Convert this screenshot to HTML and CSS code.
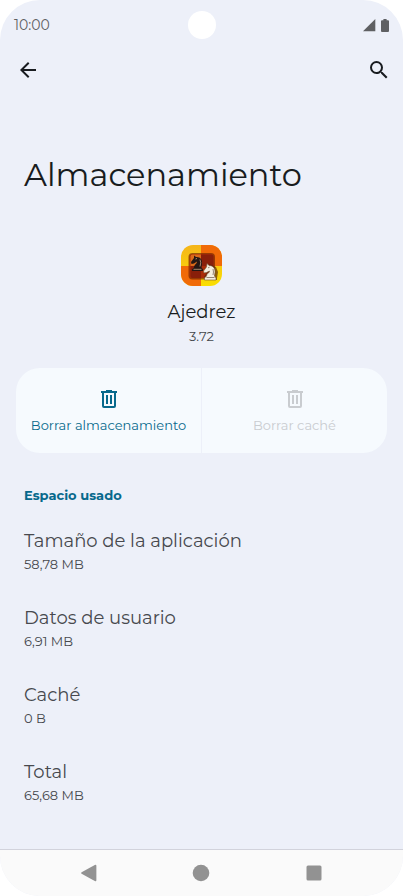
FILE: index.html
```html
<!DOCTYPE html>
<html lang="es">
<head>
<meta charset="utf-8">
<meta name="viewport" content="width=device-width, initial-scale=1">
<title>Almacenamiento</title>
<link rel="stylesheet" href="styles.css">
</head>
<body>
<div class="phone">
  <header>
    <div class="status">
      <span class="clock">10:00</span>
      <span class="camera"></span>
      <span class="indicators">
        <svg width="13" height="13" viewBox="0 0 13 13" aria-hidden="true"><path d="M12.3 0V12.3H0Z"/></svg>
        <svg width="8" height="13" viewBox="0 0 8 13" aria-hidden="true"><path d="M2.4 0h3.2v1.2H7q1 0 1 1V12q0 1-1 1H1q-1 0-1-1V2.2q0-1 1-1h1.4Z"/></svg>
      </span>
    </div>
    <div class="toolbar">
      <button type="button" class="icon-button" aria-label="Atrás">
        <svg width="24" height="24" viewBox="0 0 24 24"><path d="M20 11H7.83l5.59-5.59L12 4l-8 8 8 8 1.41-1.41L7.83 13H20v-2z"/></svg>
      </button>
      <button type="button" class="icon-button" aria-label="Buscar">
        <svg width="24" height="24" viewBox="0 0 24 24"><path d="M15.5 14h-.79l-.28-.27A6.47 6.47 0 0 0 16 9.5 6.5 6.5 0 1 0 9.5 16c1.61 0 3.09-.59 4.23-1.57l.27.28v.79l5 4.99L20.49 19l-4.99-5zm-6 0C7.01 14 5 11.99 5 9.5S7.01 5 9.5 5 14 7.01 14 9.5 11.99 14 9.5 14z"/></svg>
      </button>
    </div>
  </header>
  <main>
    <h1>Almacenamiento</h1>
    <section class="app">
      <svg class="app-icon" width="42" height="42" viewBox="0 0 42 42" role="img" aria-label="Ajedrez">
        <defs>
          <clipPath id="tile"><rect x="0" y="0" width="41" height="41" rx="12"/></clipPath>
          <linearGradient id="gold" x1="0" y1="0" x2="0" y2="1"><stop offset="0" stop-color="#f5b51c"/><stop offset="1" stop-color="#fae000"/></linearGradient>
        </defs>
        <g clip-path="url(#tile)">
          <path fill="url(#gold)" d="M0 0h42v42H0z"/>
          <path fill="#f06a08" d="M20 0h22v21H20zM0 21h20v21H0z"/>
        </g>
        <rect x="7.500" y="8" width="26.500" height="26.500" rx="4" fill="#682000" opacity=".65"/>
        <rect x="8.500" y="9" width="24" height="24" rx="3" fill="#a92c09"/>
        <path fill="#d96a1a" d="M11.500 9.500H20V21H9.500v-9.500q0-2 2-2z"/>
        <path fill="#891f0a" d="M20 9.500h10.500q2 0 2 2V21H20zM9.500 21H20v12h-8.500q-2 0-2-2z"/>
        <path fill="#241714" d="M13 10.500l2 1.500c4-.5 6.500 2.500 6 6.500l-.5 4 1.500 2V26H11v-1.500l2-2c0-3 3-3.500 3-6l-3 2-2.500.5-.5-2 3-4z"/>
        <path d="M14.500 14l1.500-.5M19 14.500q1.500 3 0 7M12.500 24.300h8" fill="none" stroke="#dfb995" stroke-width=".7"/>
        <path fill="#542009" opacity=".65" d="M28 19l7 3 2 5-1 6v2H24l-1-3 5-8z"/>
        <path fill="#f4efe0" stroke="#72512f" stroke-width=".6" d="M26 18.500l2 2c4 0 6.500 3 6 7l-.5 3.500 1.500 2v2H23.500v-2l2-2c0-2.500 3-3 3-5l-3 1.500-2.500.5-.5-2 3-4z"/>
        <path d="M27 22.800l1.500-.5M32 24q1 3 0 6M25.500 32.500h8" fill="none" stroke="#6d5847" stroke-width=".7"/>
      </svg>
      <h2>Ajedrez</h2>
      <p>3.72</p>
    </section>
    <div class="actions">
      <button type="button">
        <svg width="24" height="24" viewBox="0 0 24 24" aria-hidden="true"><path fill-rule="evenodd" d="M9 3h6v1h5v2h-1v13q0 2-2 2H7q-2 0-2-2V6H4V4h5zM7 6v13h10V6zM9 8h2v9H9zM13 8h2v9h-2z"/></svg>
        <span>Borrar almacenamiento</span>
      </button>
      <button type="button" disabled>
        <svg width="24" height="24" viewBox="0 0 24 24" aria-hidden="true"><path fill-rule="evenodd" d="M9 3h6v1h5v2h-1v13q0 2-2 2H7q-2 0-2-2V6H4V4h5zM7 6v13h10V6zM9 8h2v9H9zM13 8h2v9h-2z"/></svg>
        <span>Borrar caché</span>
      </button>
    </div>
    <section class="usage">
      <h3>Espacio usado</h3>
      <dl>
        <div><dt>Tamaño de la aplicación</dt><dd>58,78 MB</dd></div>
        <div><dt>Datos de usuario</dt><dd>6,91 MB</dd></div>
        <div><dt>Caché</dt><dd>0 B</dd></div>
        <div><dt>Total</dt><dd>65,68 MB</dd></div>
      </dl>
    </section>
  </main>
  <nav aria-label="Navegación del sistema">
    <button type="button" class="icon-button" aria-label="Atrás"><svg width="18" height="18" viewBox="0 0 18 18"><path d="M1.600 8.200L14.800 1q1.600-.7 1.600 1V16q0 1.700-1.600 1L1.600 9.800q-1.200-.8 0-1.600z"/></svg></button>
    <button type="button" class="icon-button" aria-label="Inicio"><svg width="18" height="18" viewBox="0 0 18 18"><circle cx="9" cy="9" r="8.300"/></svg></button>
    <button type="button" class="icon-button" aria-label="Recientes"><svg width="18" height="18" viewBox="0 0 18 18"><rect x="1.500" y="1.500" width="15" height="15" rx="1.500"/></svg></button>
  </nav>
</div>
</body>
</html>
```
FILE: styles.css
```css
* {
  box-sizing: border-box;
  margin: 0;
  padding: 0;
}

body {
  background: #fff;
  color: #191c20;
  font-family: Montserrat, Inter, "Liberation Sans", sans-serif;
  font-size: 13px;
  line-height: 20px;
}

svg {
  display: block;
  fill: currentColor;
}

button {
  border: 0;
  background: none;
  color: inherit;
  font: inherit;
}

.phone {
  display: flex;
  flex-direction: column;
  min-height: 100vh;
  overflow: hidden;
  border-radius: 40px;
  background: #edf0f9;
}

.status {
  display: grid;
  grid-template-columns: 1fr auto 1fr;
  align-items: center;
  height: 50px;
  padding: 0 14px;
  color: #5f6063;
}

.clock {
  font-size: 14px;
}

.camera {
  width: 28px;
  height: 28px;
  border-radius: 50%;
  background: #fff;
}

.indicators {
  display: flex;
  justify-content: flex-end;
  gap: 5px;
}

.toolbar {
  display: flex;
  align-items: center;
  justify-content: space-between;
  height: 40px;
  padding: 0 4px 0 8px;
}

.icon-button {
  display: grid;
  place-items: center;
  width: 40px;
  height: 40px;
}

h1 {
  margin: 63px 24px 48px;
  font-size: 32px;
  font-weight: 400;
  line-height: 44px;
}

.app {
  display: flex;
  flex-direction: column;
  align-items: center;
  color: #44474b;
}

.app h2 {
  margin: 12px 0 1px;
  color: #191c20;
  font-size: 18px;
  font-weight: 400;
  line-height: 26px;
}

.actions {
  display: grid;
  grid-template-columns: 1fr 1fr;
  gap: 1px;
  margin: 22px 16px 32px;
  overflow: hidden;
  border-radius: 24px;
}

.actions button {
  display: flex;
  flex-direction: column;
  align-items: center;
  gap: 4px;
  padding: 19px 8px 18px;
  background: #f6fafe;
  color: #07698c;
}

.actions button:disabled {
  color: #c9ccd0;
}

.usage {
  padding: 0 24px;
  color: #47494e;
}

h3 {
  margin-bottom: 23px;
  color: #07698c;
  font-size: 13px;
  font-weight: 700;
}

dl {
  display: grid;
  gap: 31px;
}

dt {
  font-size: 18px;
  line-height: 26px;
}

nav {
  display: grid;
  grid-template-columns: repeat(3, 1fr);
  place-items: center;
  height: 47px;
  margin-top: auto;
  padding: 0 33px;
  border-top: 1px solid #d2d3dc;
  background: #fafafa;
  color: #929292;
}
```
